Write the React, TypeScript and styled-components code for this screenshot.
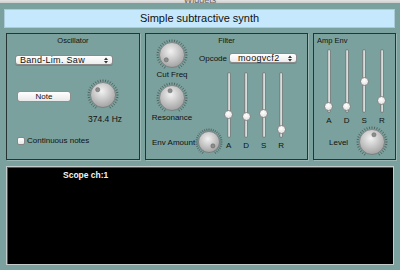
import React, { FC, useId } from 'react';
import styled, { createGlobalStyle } from 'styled-components';

const GlobalStyle = createGlobalStyle`
	html, body {
		margin: 0;
		padding: 0;
		background: #7aa19d;
	}
	body {
		font-family: 'Liberation Sans', Arial, sans-serif;
		color: #111;
	}
`;

const Window = styled.div`
	width: 400px;
	height: 270px;
	background: #7aa19d;
	display: flex;
	flex-direction: column;
	overflow: hidden;
`;

const TitleStrip = styled.div`
	height: 3px;
	background: linear-gradient(#e4e4e4, #cdcdcd);
	overflow: hidden;
	text-align: center;
	font-size: 9px;
	line-height: 1px;
	color: #666;
`;

const Banner = styled.div`
	margin: 6px 0 0 4px;
	width: 391px;
	height: 19px;
	box-sizing: border-box;
	background: #c6e8fc;
	border: 1px solid #abcbd8;
	display: flex;
	align-items: center;
	justify-content: center;
	padding-bottom: 2px;
	font-size: 11px;
`;

const PanelRow = styled.div`
	display: flex;
	gap: 5px;
	margin: 5px 0 0 6px;
`;

const Panel = styled.div<{ $w: number }>`
	width: ${({ $w }) => $w}px;
	height: 127px;
	box-sizing: border-box;
	border: 1px solid #263534;
	box-shadow: 1px 1px 0 rgba(255, 255, 255, 0.25);
	padding-top: 2px;
	display: flex;
	flex-direction: column;
`;

const GroupTitle = styled.div<{ $align?: string }>`
	font-size: 7.5px;
	line-height: 9px;
	height: 9px;
	text-align: ${({ $align }) => $align ?? 'center'};
	padding-left: ${({ $align }) => ($align === 'left' ? '3px' : '0')};
`;

const Label = styled.div`
	font-size: 8px;
	line-height: 9px;
	white-space: nowrap;
`;

const PopupWrap = styled.div<{ $w: number }>`
	width: ${({ $w }) => $w}px;
	height: 10px;
	box-sizing: border-box;
	border: 1px solid #8a8a8a;
	border-radius: 3px;
	background: linear-gradient(#ffffff, #ececec);
	box-shadow: 0 1px 0 rgba(0, 0, 0, 0.15);
	display: flex;
	align-items: center;
	justify-content: space-between;
	padding: 0 4px 0 4px;
	font-size: 9px;
	letter-spacing: 0.3px;
	line-height: 8px;
`;

const Popup: FC<{ value: string; width: number; indent?: number }> = ({ value, width, indent = 0 }) => (
	<PopupWrap $w={width}>
		<span style={{ paddingLeft: indent }}>{value}</span>
		<svg width="4" height="7" viewBox="0 0 4 7">
			<path d="M0 3 L2 0.5 L4 3 Z M0 4 L2 6.5 L4 4 Z" fill="#333" />
		</svg>
	</PopupWrap>
);

const KnobSvg = styled.svg`
	display: block;
	flex-shrink: 0;
`;

const Knob: FC<{ size?: number; angle: number }> = ({ size = 32, angle }) => {
	const id = useId().replace(/:/g, '');
	const c = size / 2;
	const r = c - 3.5;
	const ticks = [];
	for (let a = -150; a <= 150; a += 10) {
		const t = (a * Math.PI) / 180;
		ticks.push(
			<line
				key={a}
				x1={c + Math.sin(t) * (r + 0.8)}
				y1={c - Math.cos(t) * (r + 0.8)}
				x2={c + Math.sin(t) * (r + 3)}
				y2={c - Math.cos(t) * (r + 3)}
			/>
		);
	}
	const t = (angle * Math.PI) / 180;
	const dx = c + Math.sin(t) * (r - 5);
	const dy = c - Math.cos(t) * (r - 5);

	return (
		<KnobSvg width={size} height={size} viewBox={`0 0 ${size} ${size}`}>
			<defs>
				<radialGradient id={`${id}g`} cx="45%" cy="35%" r="70%">
					<stop offset="0" stopColor="#f2f2f2" />
					<stop offset="1" stopColor="#9c9c9c" />
				</radialGradient>
			</defs>
			<g stroke="#3b4847" strokeWidth={0.7}>
				{ticks}
			</g>
			<circle cx={c} cy={c} r={r} fill={`url(#${id}g)`} stroke="#686868" strokeWidth={0.6} />
			<circle cx={dx} cy={dy} r={2.1} fill="#8c8c8c" stroke="#5e5e5e" strokeWidth={0.5} />
		</KnobSvg>
	);
};

const SliderBank = styled.div<{ $mt: number }>`
	display: flex;
	margin-top: ${({ $mt }) => $mt}px;
`;

const SliderCol = styled.div<{ $w: number }>`
	width: ${({ $w }) => $w}px;
	display: flex;
	flex-direction: column;
	align-items: center;
`;

const Track = styled.div<{ $h: number }>`
	position: relative;
	width: 4px;
	height: ${({ $h }) => $h}px;
	box-sizing: border-box;
	background: linear-gradient(90deg, #b9bfbf, #e2e6e6);
	border: 1px solid #7b8584;
	border-radius: 2px;
`;

const Thumb = styled.div`
	position: absolute;
	left: 50%;
	width: 9px;
	height: 9px;
	margin-left: -4.5px;
	margin-top: -4.5px;
	box-sizing: border-box;
	border-radius: 50%;
	border: 1px solid #8a8a8a;
	background: radial-gradient(circle at 45% 35%, #ffffff, #dadada);
`;

const SliderLabel = styled.div`
	font-size: 8px;
	line-height: 8px;
	margin-top: 4px;
`;

type SliderSpec = { name: string; pos: number };

const Sliders: FC<{ items: SliderSpec[]; height: number; colWidth: number; mt: number }> = ({
	items,
	height,
	colWidth,
	mt,
}) => (
	<SliderBank $mt={mt}>
		{items.map((s) => (
			<SliderCol key={s.name} $w={colWidth}>
				<Track $h={height}>
					<Thumb style={{ top: s.pos }} />
				</Track>
				<SliderLabel>{s.name}</SliderLabel>
			</SliderCol>
		))}
	</SliderBank>
);

/* Oscillator */

const OscSelect = styled.div`
	margin: 10px 0 0 8px;
`;

const OscRow = styled.div`
	display: flex;
	align-items: flex-start;
	margin: 14px 0 0 10px;
`;

const NoteButton = styled.div`
	width: 54px;
	height: 11px;
	box-sizing: border-box;
	margin-top: 12px;
	border: 1px solid #8f8f8f;
	border-radius: 3px;
	background: linear-gradient(#ffffff, #e9e9e9);
	font-size: 8px;
	line-height: 9px;
	text-align: center;
`;

const KnobStack = styled.div`
	display: flex;
	flex-direction: column;
	align-items: center;
	margin-left: 13px;
`;

const HzLabel = styled(Label)`
	font-size: 8.5px;
	margin-top: 4px;
	padding-left: 4px;
`;

const CheckRow = styled.div`
	display: flex;
	align-items: center;
	margin: 12px 0 0 10px;
	gap: 2px;
`;

const CheckBox = styled.div`
	width: 8px;
	height: 8px;
	box-sizing: border-box;
	border: 1px solid #888;
	border-radius: 2px;
	background: linear-gradient(#fff, #e8e8e8);
`;

/* Filter */

const FilterMain = styled.div`
	display: flex;
	margin-top: -8px;
`;

const KnobCol = styled.div`
	width: 74px;
	display: flex;
	flex-direction: column;
	padding-top: 2px;
`;

const KnobGroup = styled.div<{ $mt?: number }>`
	width: 52px;
	display: flex;
	flex-direction: column;
	align-items: center;
	margin-top: ${({ $mt }) => $mt ?? 0}px;

	${Label} {
		margin-top: -1px;
	}
`;

const EnvRow = styled.div`
	display: flex;
	align-items: center;
	margin: 6px 0 0 6px;
`;

const SideCol = styled.div`
	display: flex;
	flex-direction: column;
`;

const OpcodeRow = styled.div`
	display: flex;
	align-items: center;
	gap: 2px;
	margin: 16px 0 0 -21px;
`;

/* Amp env */

const LevelRow = styled.div`
	display: flex;
	align-items: center;
	margin: 1px 0 0 15px;
	gap: 8px;
`;

/* Scope */

const Scope = styled.div`
	margin: 6px 0 0 6px;
	width: 388px;
	height: 99px;
	box-sizing: border-box;
	background: #000;
	border: 1px solid #c3cccb;
	box-shadow: inset 1px 1px 0 #555;
	padding: 3px 0 0 56px;
`;

const ScopeTitle = styled.div`
	color: #f2f2f2;
	font-weight: bold;
	font-size: 8.5px;
	line-height: 10px;
`;

const filterSliders: SliderSpec[] = [
	{ name: 'A', pos: 41 },
	{ name: 'D', pos: 43 },
	{ name: 'S', pos: 40 },
	{ name: 'R', pos: 56 },
];

const ampSliders: SliderSpec[] = [
	{ name: 'A', pos: 56 },
	{ name: 'D', pos: 56 },
	{ name: 'S', pos: 31 },
	{ name: 'R', pos: 50 },
];

const App: FC = () => (
	<>
		<GlobalStyle />
		<Window>
			<TitleStrip>Widgets</TitleStrip>
			<Banner>Simple subtractive synth</Banner>
			<PanelRow>
				<Panel $w={134}>
					<GroupTitle>Oscillator</GroupTitle>
					<OscSelect>
						<Popup value="Band-Lim. Saw" width={98} />
					</OscSelect>
					<OscRow>
						<NoteButton>Note</NoteButton>
						<KnobStack>
							<Knob angle={-45} />
							<HzLabel>374.4 Hz</HzLabel>
						</KnobStack>
					</OscRow>
					<CheckRow>
						<CheckBox />
						<Label>Continuous notes</Label>
					</CheckRow>
				</Panel>

				<Panel $w={163}>
					<GroupTitle>Filter</GroupTitle>
					<FilterMain>
						<KnobCol>
							<KnobGroup>
								<Knob angle={-130} />
								<Label>Cut Freq</Label>
							</KnobGroup>
							<KnobGroup $mt={3}>
								<Knob angle={-15} />
								<Label>Resonance</Label>
							</KnobGroup>
							<EnvRow>
								<Label>Env Amount</Label>
								<Knob size={28} angle={135} />
							</EnvRow>
						</KnobCol>
						<SideCol>
							<OpcodeRow>
								<Label>Opcode</Label>
								<Popup value="moogvcf2" width={68} indent={4} />
							</OpcodeRow>
							<Sliders items={filterSliders} height={66} colWidth={17.5} mt={9} />
						</SideCol>
					</FilterMain>
				</Panel>

				<Panel $w={83}>
					<GroupTitle $align="left">Amp Env</GroupTitle>
					<div style={{ paddingLeft: 6 }}>
						<Sliders items={ampSliders} height={64} colWidth={17.7} mt={4} />
					</div>
					<LevelRow>
						<Label>Level</Label>
						<Knob angle={15} />
					</LevelRow>
				</Panel>
			</PanelRow>
			<Scope>
				<ScopeTitle>Scope ch:1</ScopeTitle>
			</Scope>
		</Window>
	</>
);

export default App;
